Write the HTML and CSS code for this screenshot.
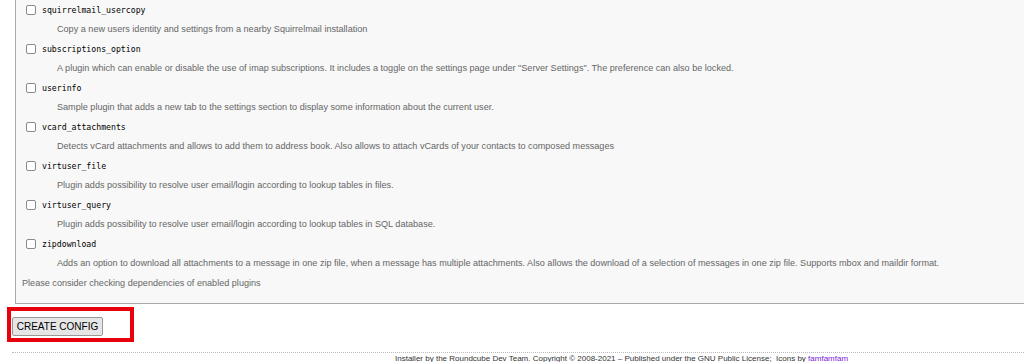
FILE: index.html
```
<!DOCTYPE html>
<html lang="en">
<head>
  <meta charset="UTF-8">
  <title>Roundcube Webmail Installer</title>
  <link rel="stylesheet" href="styles.css">
</head>
<body>

  <div class="plugins">
    <div class="plugin">
      <div class="plugin-name"><input type="checkbox"> <span>squirrelmail_usercopy</span></div>
      <div class="plugin-desc">Copy a new users identity and settings from a nearby Squirrelmail installation</div>
    </div>
    <div class="plugin">
      <div class="plugin-name"><input type="checkbox"> <span>subscriptions_option</span></div>
      <div class="plugin-desc">A plugin which can enable or disable the use of imap subscriptions. It includes a toggle on the settings page under "Server Settings". The preference can also be locked.</div>
    </div>
    <div class="plugin">
      <div class="plugin-name"><input type="checkbox"> <span>userinfo</span></div>
      <div class="plugin-desc">Sample plugin that adds a new tab to the settings section to display some information about the current user.</div>
    </div>
    <div class="plugin">
      <div class="plugin-name"><input type="checkbox"> <span>vcard_attachments</span></div>
      <div class="plugin-desc">Detects vCard attachments and allows to add them to address book. Also allows to attach vCards of your contacts to composed messages</div>
    </div>
    <div class="plugin">
      <div class="plugin-name"><input type="checkbox"> <span>virtuser_file</span></div>
      <div class="plugin-desc">Plugin adds possibility to resolve user email/login according to lookup tables in files.</div>
    </div>
    <div class="plugin">
      <div class="plugin-name"><input type="checkbox"> <span>virtuser_query</span></div>
      <div class="plugin-desc">Plugin adds possibility to resolve user email/login according to lookup tables in SQL database.</div>
    </div>
    <div class="plugin">
      <div class="plugin-name"><input type="checkbox"> <span>zipdownload</span></div>
      <div class="plugin-desc">Adds an option to download all attachments to a message in one zip file, when a message has multiple attachments. Also allows the download of a selection of messages in one zip file. Supports mbox and maildir format.</div>
    </div>
    <p class="hint">Please consider checking dependencies of enabled plugins</p>
  </div>

  <div class="submit-box">
    <button type="submit" class="create-btn">CREATE CONFIG</button>
  </div>

  <div class="footer">
    Installer by the Roundcube Dev Team. Copyright &copy; 2008-2021 &ndash; Published under the GNU Public License;&nbsp; Icons by <a href="#">famfamfam</a>
  </div>

</body>
</html>
```

FILE: styles.css
```
body {
  font-family: 'Liberation Sans', Arial, sans-serif;
  background-color: #fff;
  color: #333;
  margin: 0;
  padding: 0;
  overflow: hidden;
}

.plugins {
  margin: 0 -20px 0 15px;
  border: 1px solid #aaa;
  border-top: 0;
  background: #f8f8f8;
  padding: 0 0 10px 0;
}

.plugin-name {
  height: 20px;
  display: flex;
  align-items: center;
  padding-left: 10px;
  font-family: 'DejaVu Sans Mono', monospace;
  font-size: 8.2px;
  color: #000;
}

.plugin-name input {
  appearance: none;
  width: 10px;
  height: 10px;
  margin: 0 6px 0 0;
  border: 1px solid #8a8a8a;
  border-radius: 2px;
  background: #fff;
}

.plugin-desc {
  height: 19px;
  line-height: 19px;
  padding-left: 41px;
  font-size: 9.1px;
  color: #666;
  white-space: nowrap;
}

.hint {
  margin: 0;
  padding: 1px 0 0 6px;
  line-height: 19px;
  font-size: 9.1px;
  color: #666;
}

.submit-box {
  margin: 3px 0 0 7px;
  width: 119px;
  height: 27px;
  border: 4px solid #e8000b;
  padding: 0;
}

.create-btn {
  display: block;
  margin: 6px 0 0 1px;
  width: 91px;
  height: 19px;
  padding: 0;
  font-family: 'Liberation Sans', Arial, sans-serif;
  font-size: 10px;
  color: #000;
  background: #e6e6e6;
  border: 1px solid #999;
  border-radius: 2px;
}

.footer {
  margin: 10px 0 0 12px;
  border-top: 1px dotted #bbb;
  padding: 1px 0 0 383px;
  font-size: 8px;
  color: #333;
}

.footer a {
  color: #7a1ad8;
}
```
